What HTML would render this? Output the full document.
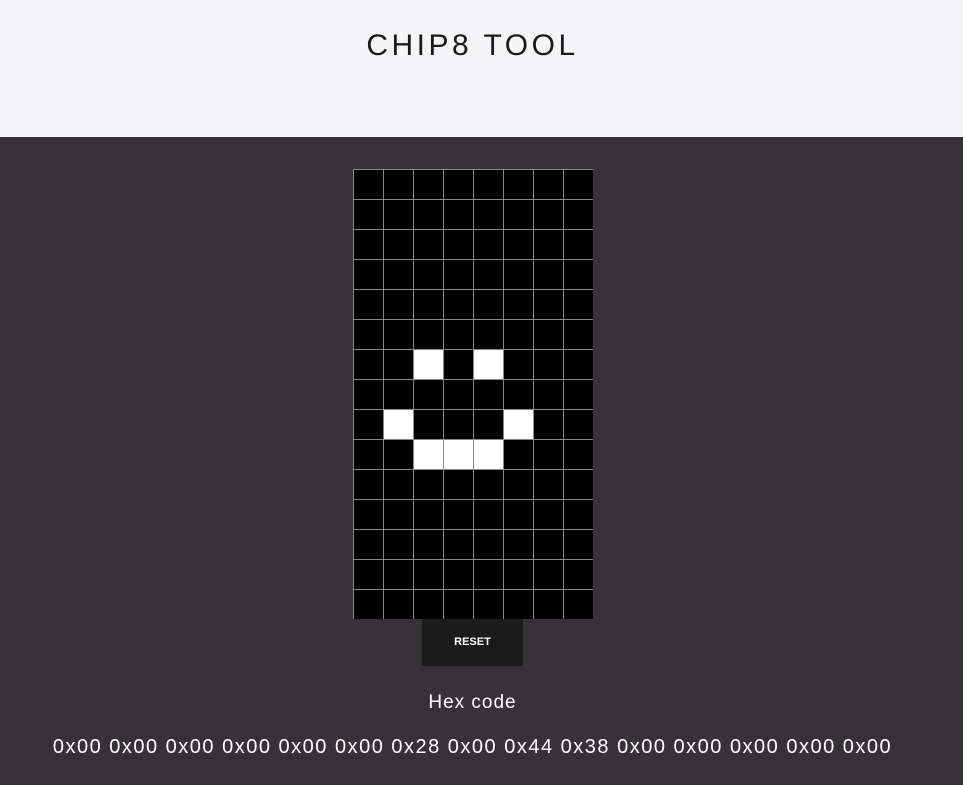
<!DOCTYPE html>
<html><head><style>
body{margin:0;width:963px;height:785px;background:#373237;font-family:"Liberation Sans",sans-serif;overflow:hidden;position:relative}
.hd{position:absolute;left:0;top:0;width:963px;height:137px;background:#f5f5f7}
.hd h1{position:absolute;left:0;width:945px;top:29px;margin:0;text-align:center;font-weight:normal;font-size:30px;letter-spacing:3.5px;color:#1a1a1a}
.grid{position:absolute;left:353px;top:169px;width:240px;height:450px;background:#000}
.c{position:absolute;width:30px;height:30px;box-sizing:border-box;border-left:1px solid #888;border-top:1px solid #888}
.w{background:#fff}
.btn{position:absolute;left:422px;top:619px;width:101px;height:47px;background:#1b1b1b;color:#fff;font-size:11px;font-weight:bold;text-align:center;line-height:47px}
.t1{position:absolute;left:0;width:945px;top:692px;text-align:center;color:#fff;font-size:19px;letter-spacing:1px}
.t2{position:absolute;left:0;width:945px;top:736px;text-align:center;color:#fff;font-size:20px;letter-spacing:1.5px}
</style></head><body>
<div class="hd"><h1>CHIP8 TOOL</h1></div>
<div class="grid" id="g"></div>
<div class="btn">RESET</div>
<div class="t1">Hex code</div>
<div class="t2">0x00 0x00 0x00 0x00 0x00 0x00 0x28 0x00 0x44 0x38 0x00 0x00 0x00 0x00 0x00</div>
<script>
var v=[0,0,0,0,0,0,0x28,0,0x44,0x38,0,0,0,0,0],h='';
for(var r=0;r<15;r++)for(var c=0;c<8;c++){var on=(v[r]>>(7-c))&1;h+='<div class="c'+(on?' w':'')+'" style="left:'+c*30+'px;top:'+r*30+'px"></div>';}
document.getElementById('g').innerHTML=h;
</script>
</body></html>
